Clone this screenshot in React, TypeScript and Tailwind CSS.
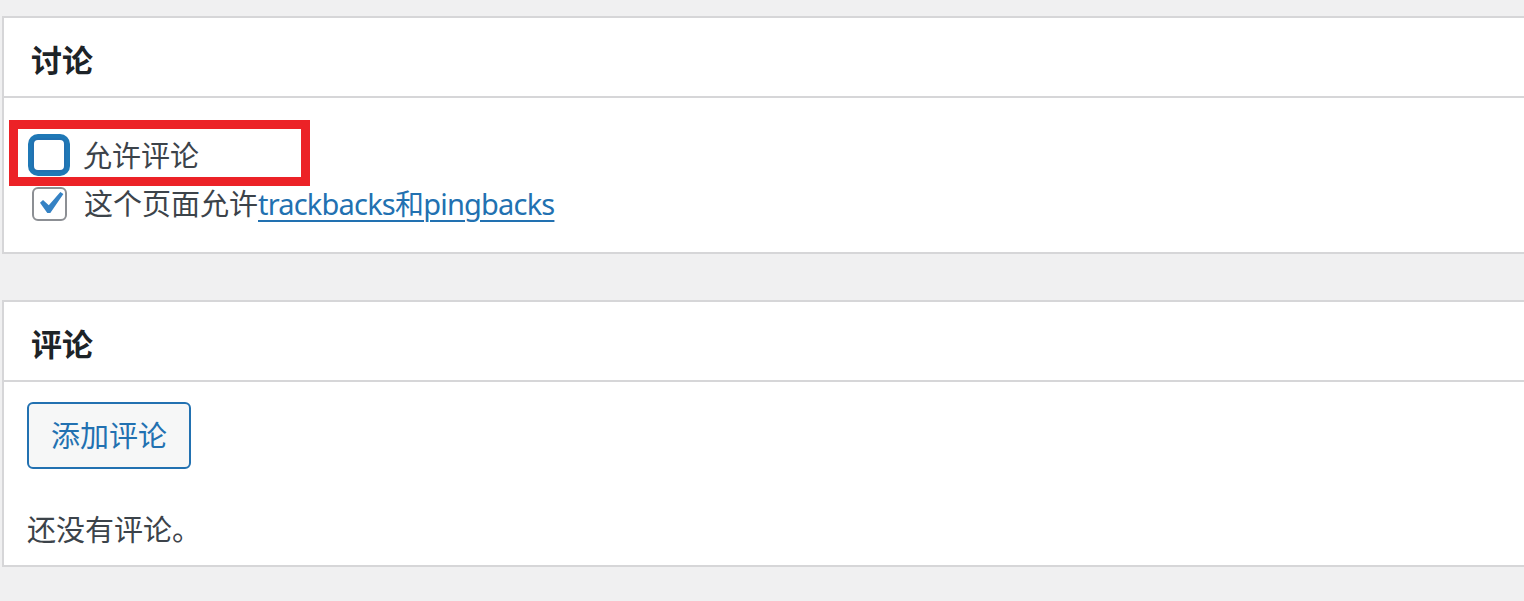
import React from 'react';

const font = { fontFamily: '"Noto Sans", "Noto Sans CJK SC", sans-serif' };

const Panel: React.FC<{ title: string; children: React.ReactNode }> = ({ title, children }) => (
  <div className="bg-white border-y-2 border-l-2 border-[#d6d6d8]">
    <div className="h-[80px] flex items-center pl-[27px] pt-[6px] border-b-2 border-[#d6d6d8]">
      <h2 className="text-[31px] leading-none font-semibold text-[#1d2327]">{title}</h2>
    </div>
    {children}
  </div>
);

const CheckMark = () => (
  <svg viewBox="0 0 20 20" className="w-[45px] h-[45px] shrink-0">
    <path d="M14.83 4.89l1.34.94-5.81 8.38H9.02L5.78 9.67l1.34-1.25 2.57 2.4z" fill="#3582c4" />
  </svg>
);

export default function App() {
  return (
    <div className="min-h-screen bg-[#f0f0f1] pt-[16px] pl-[2px] overflow-hidden" style={font}>
      <Panel title="讨论">
        <div className="relative pt-[32px] pb-[24px] pl-[28px] text-[29px] text-[#3c434a]">
          <label className="flex items-center h-[49px]">
            <span className="w-[34px] h-[34px] rounded-[6px] border-2 border-[#2271b1] shadow-[0_0_0_4px_#1f78b6] bg-white" />
            <span className="ml-[17px] pt-[2px]">允许评论</span>
          </label>
          <label className="flex items-center h-[49px]">
            <span className="w-[35px] h-[34px] rounded-[6px] border-2 border-[#8c8f94] bg-white flex items-center justify-center">
              <CheckMark />
            </span>
            <span className="ml-[17px]">
              这个页面允许
              <a href="#" className="text-[#2271b1] underline underline-offset-[5px] decoration-[2px] tracking-[-0.8px]">
                trackbacks和pingbacks
              </a>
            </span>
          </label>
          <div className="absolute left-[5px] top-[22px] w-[301px] h-[66px] border-[9px] border-[#ec2227]" />
        </div>
      </Panel>

      <div className="h-[46px]" />

      <Panel title="评论">
        <div className="pt-[20px] pb-[15px] pl-[23px] text-[29px] text-[#3c434a]">
          <button className="h-[67px] px-[22px] rounded-[6px] border-2 border-[#2271b1] bg-[#f6f7f7] text-[#2271b1] text-[29px] leading-none">
            添加评论
          </button>
          <p className="mt-[41px] leading-[40px]">还没有评论。</p>
        </div>
      </Panel>
    </div>
  );
}
